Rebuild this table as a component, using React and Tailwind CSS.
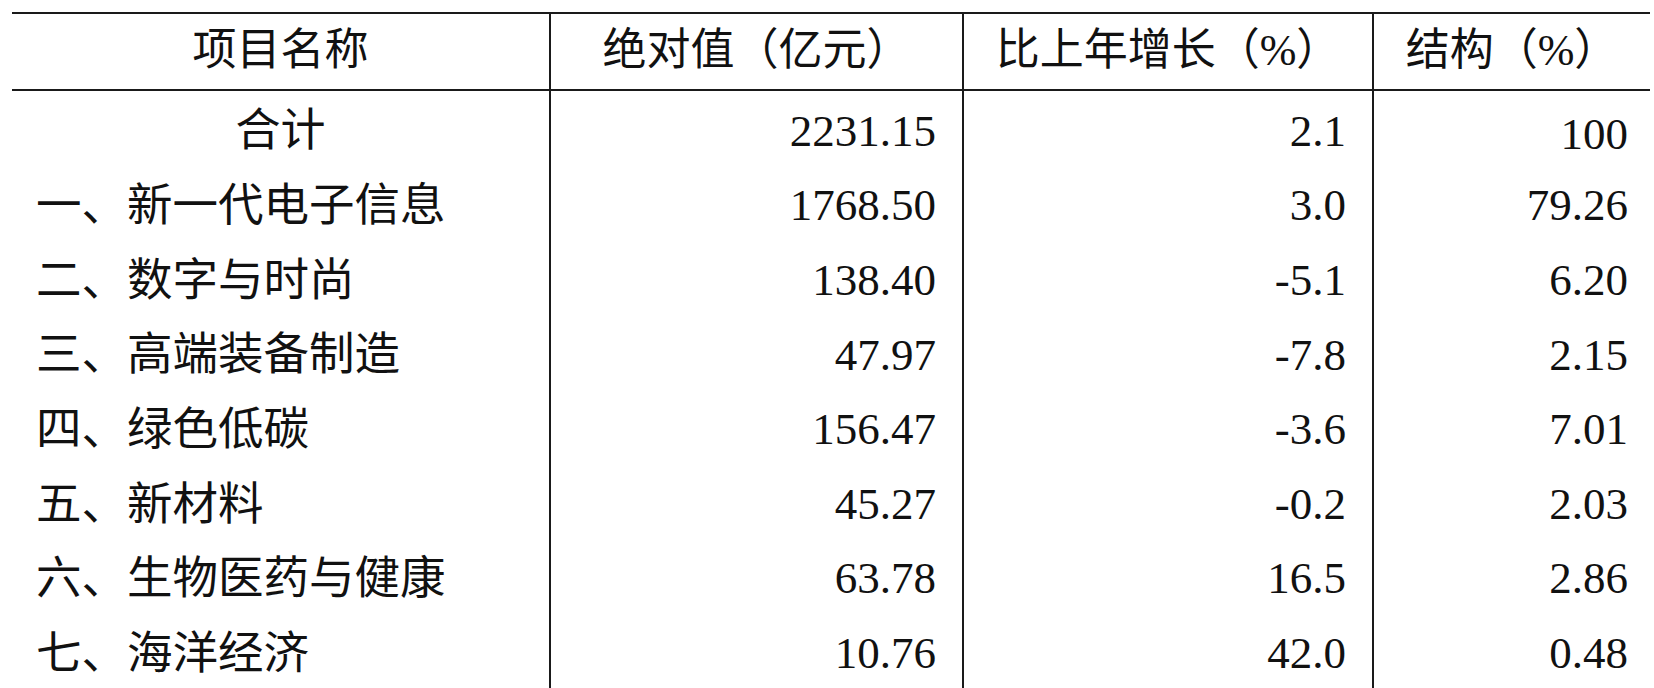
const rows = [
  { name: '合计', value: '2231.15', growth: '2.1', share: '100', center: true },
  { name: '一、新一代电子信息', value: '1768.50', growth: '3.0', share: '79.26' },
  { name: '二、数字与时尚', value: '138.40', growth: '-5.1', share: '6.20' },
  { name: '三、高端装备制造', value: '47.97', growth: '-7.8', share: '2.15' },
  { name: '四、绿色低碳', value: '156.47', growth: '-3.6', share: '7.01' },
  { name: '五、新材料', value: '45.27', growth: '-0.2', share: '2.03' },
  { name: '六、生物医药与健康', value: '63.78', growth: '16.5', share: '2.86' },
  { name: '七、海洋经济', value: '10.76', growth: '42.0', share: '0.48' },
]

const headers = ['项目名称', '绝对值（亿元）', '比上年增长（%）', '结构（%）']

export default function App() {
  return (
    <div className="w-[1654px] h-[688px] overflow-hidden bg-white pt-[12px] pl-[12px] text-[45px] leading-none text-[#111] font-['Liberation_Serif','Noto_Sans_CJK_SC',serif]">
      <div className="w-[1638px] border-t-2 border-[#1a1a1a]">
        <div className="grid grid-cols-[539px_413px_410px_276px] h-[77px] border-b-2 border-[#1a1a1a]">
          {headers.map((h, i) => (
            <div
              key={h}
              className={`flex items-center justify-center pb-[2px] text-[44px] ${i < 3 ? 'border-r-2 border-[#1a1a1a]' : ''}`}
            >
              {h}
            </div>
          ))}
        </div>
        <div className="grid grid-cols-[539px_413px_410px_276px]">
          <div className="border-r-2 border-[#1a1a1a] pt-[3px]">
            {rows.map((r) => (
              <div
                key={r.name}
                className={`h-[74.6px] flex items-center ${r.center ? 'justify-center' : 'pl-[24px] text-[45.5px]'}`}
              >
                {r.name}
              </div>
            ))}
          </div>
          <div className="border-r-2 border-[#1a1a1a] pt-[3px]">
            {rows.map((r) => (
              <div key={r.name} className="h-[74.6px] flex items-center justify-end pr-[26px]">
                {r.value}
              </div>
            ))}
          </div>
          <div className="border-r-2 border-[#1a1a1a] pt-[3px]">
            {rows.map((r) => (
              <div key={r.name} className="h-[74.6px] flex items-center justify-end pr-[26px]">
                {r.growth}
              </div>
            ))}
          </div>
          <div className="pt-[3px]">
            {rows.map((r) => (
              <div
                key={r.name}
                className={`h-[74.6px] flex items-center justify-end pr-[22px] ${r.center ? 'pt-[6px]' : ''}`}
              >
                {r.share}
              </div>
            ))}
          </div>
        </div>
      </div>
    </div>
  )
}
